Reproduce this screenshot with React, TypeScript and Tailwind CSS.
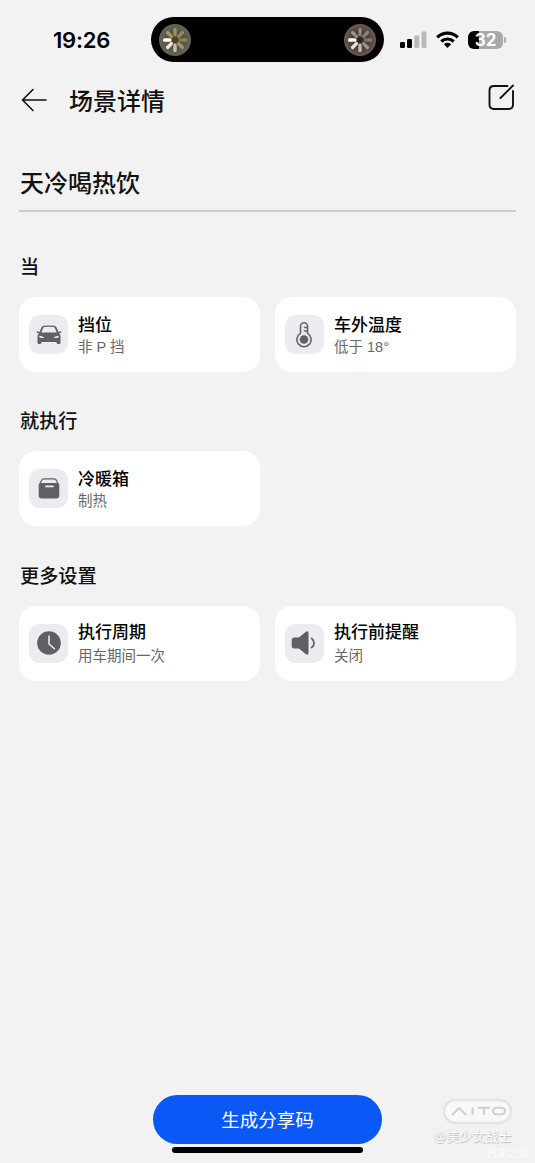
import type { ReactNode } from "react";

const SPOKES = [0, 45, 90, 135, 180, 225, 270, 315];
const OPACITY = [0.45, 0.4, 0.35, 0.5, 0.65, 0.85, 1, 0.5];

function Spinner({ id, inner, outer, tint }: { id: string; inner: string; outer: string; tint: string }) {
  return (
    <svg className="h-8 w-8" viewBox="0 0 32 32" aria-hidden>
      <defs>
        <radialGradient id={id}>
          <stop offset="0" stopColor={inner} />
          <stop offset="1" stopColor={outer} />
        </radialGradient>
      </defs>
      <circle cx="16" cy="16" r="16" fill={`url(#${id})`} />
      {SPOKES.map((angle, i) => (
        <rect
          key={angle}
          x="14.3"
          y="4"
          width="3.4"
          height="8.5"
          rx="1.5"
          fill={i > 3 && i < 7 ? "#fff" : tint}
          opacity={OPACITY[i]}
          transform={`rotate(${angle} 16 16)`}
        />
      ))}
    </svg>
  );
}

function StatusBar() {
  return (
    <div className="flex h-[62px] pt-[17px]">
      <div className="w-[151px] pl-[53px] font-['Inter'] text-[22px] leading-[46px] font-semibold tracking-[-0.2px] text-black">
        19:26
      </div>
      <div className="flex h-[45px] w-[233px] items-center justify-between rounded-full bg-black pr-2 pl-2">
        <Spinner id="left" inner="#4b4016" outer="#66645f" tint="#e8d9a4" />
        <Spinner id="right" inner="#2b1d18" outer="#6b5a52" tint="#e6e6e6" />
      </div>
      <div className="flex h-[45px] items-center pl-4">
        <svg width="27" height="18" viewBox="0 0 27 18" aria-hidden>
          <rect x="0" y="11" width="5" height="6" rx="1.2" fill="#000" />
          <rect x="7" y="8" width="5" height="9" rx="1.2" fill="#000" />
          <rect x="14.3" y="4.500" width="5" height="12.500" rx="1.2" fill="#b9b9b9" />
          <rect x="21.500" y="0.500" width="5" height="16.500" rx="1.2" fill="#b9b9b9" />
        </svg>
        <svg className="ml-[9px]" width="23" height="18" viewBox="0 0 23 18" aria-hidden>
          <g fill="none" stroke="#000" strokeWidth="3.2">
            <path d="M1.200 6.400a14.700 14.700 0 0 1 20.600 0" />
            <path d="M5.300 10.500a8.900 8.900 0 0 1 12.400 0" />
          </g>
          <path d="M11.500 17 7.900 13.300a5.200 5.200 0 0 1 7.200 0z" fill="#000" />
        </svg>
        <div className="ml-[9px] flex items-center">
          <div className="flex h-[18px] w-[35px] items-center justify-center rounded-md bg-[linear-gradient(90deg,#000_0_11px,#a9a9a9_11px)] font-['Inter'] text-[17px] leading-[18px] font-bold text-white">
            32
          </div>
          <div className="ml-px h-[6px] w-[2px] rounded-r-full bg-[#a9a9a9]" />
        </div>
      </div>
    </div>
  );
}

function CarIcon() {
  return (
    <svg width="26" height="20" viewBox="0 0 26 20" aria-hidden>
      <path
        fill="#5f5f64"
        fillRule="evenodd"
        d="M7.500 .8Q13 0 18.500 .8 20 1.100 20.700 2.700L22.500 7l2-.8q1-.2 1 .7-.1.800-2.300 1.400 1.300 1.400 1.300 3.700v5.500q0 1.500-1.400 1.500h-1.300q-1.300 0-1.300-2H5.500q0 2-1.300 2H2.900q-1.400 0-1.400-1.500V12q0-2.300 1.300-3.700Q.6 7.700.5 6.900q0-.9 1-.7l2 .8L5.300 2.700Q6 1.100 7.500 .8ZM7.200 3 5.300 7.600h15.400L18.800 3Q18.500 2.200 17.500 2 13 1.400 8.500 2 7.500 2.200 7.200 3ZM3.300 10.700q-.1 1.800.6 2.100l3.700.2q.8 0 .3-.7-1.500-1.300-4.600-1.600Zm19.400 0q-3.100.3-4.600 1.600-.5.700.3.700l3.700-.2q.7-.3.600-2.100Z"
      />
    </svg>
  );
}

function ThermometerIcon() {
  return (
    <svg className="mr-px" width="16" height="26" viewBox="0 0 16 26" fill="none" stroke="#66666a" strokeWidth="1.600" strokeLinecap="round" aria-hidden>
      <path d="M4.500 11.400V4.300a3.500 3.500 0 0 1 7 0v7.100a7.100 7.100 0 1 1-7 0Z" />
      <path d="M8.300 5.500h2.800M8.300 9h2.800" strokeWidth="1.300" />
      <circle cx="8" cy="17.500" r="4.300" fill="#5f5f64" stroke="none" />
    </svg>
  );
}

function BoxIcon() {
  return (
    <svg width="22" height="21" viewBox="0 0 22 21" aria-hidden>
      <path d="M1.300 7 3.700 2.200Q4.300.9 5.700.9h10.600q1.400 0 2 1.300L20.700 7" fill="none" stroke="#5f5f64" strokeWidth="1.300" />
      <path
        fill="#5f5f64"
        fillRule="evenodd"
        d="M3.200 5h15.600q2.500.3 2.500 2.300v10.200q0 3-3 3H3.700q-3 0-3-3V7.300Q.7 5.300 3.200 5ZM8 7.600a.8.8 0 0 0 0 1.700h7a.8.8 0 0 0 0-1.700Z"
      />
    </svg>
  );
}

function ClockIcon() {
  return (
    <svg width="24" height="24" viewBox="0 0 24 24" aria-hidden>
      <circle cx="12" cy="12" r="11.800" fill="#5f5f64" />
      <path d="M12 5v8l5.500 4.700" fill="none" stroke="#f1f1f5" strokeWidth="1.500" strokeLinecap="round" strokeLinejoin="round" />
    </svg>
  );
}

function SpeakerIcon() {
  return (
    <svg className="mr-px" width="26" height="24" viewBox="0 0 26 24" aria-hidden>
      <path
        fill="#5f5f64"
        d="M3.200 6.500h4.700l6.700-5.600Q17.500-.8 17.500 2.500v19q0 3.300-2.900 1.600l-6.700-5.600H3.200Q.7 17.500.7 15V9q0-2.500 2.500-2.500Z"
      />
      <path d="M20.700 7.300q4.700 4.700 0 9.400" fill="none" stroke="#5f5f64" strokeWidth="1.700" strokeLinecap="round" />
    </svg>
  );
}

function Card({ icon, title, detail, loose }: { icon: ReactNode; title: string; detail: string; loose?: boolean }) {
  return (
    <div className="flex h-[75px] items-center rounded-[17px] bg-white pl-[10px]">
      <div className="flex h-[39px] w-[39px] items-center justify-center rounded-[11px] bg-[#ebebf0]">{icon}</div>
      <div className="ml-[10px] pt-[3px]">
        <p className="text-[17px] leading-[22px] font-medium text-black">{title}</p>
        <p className={`text-[14.5px] leading-[21px] text-[#66666a] ${loose ? "mt-[2px]" : ""}`}>{detail}</p>
      </div>
    </div>
  );
}

function Section({ title, children }: { title: string; children: ReactNode }) {
  return (
    <section className="mb-[33.4px]">
      <h2 className="h-[30px] pt-[2px] pl-px text-[19.2px] leading-[30px] font-medium text-[#111]">{title}</h2>
      <div className="mt-4 grid grid-cols-2 gap-[15px]">{children}</div>
    </section>
  );
}

export default function App() {
  return (
    <div className="relative flex h-[1163px] w-[535px] flex-col overflow-hidden bg-[#f2f2f3] font-['Liberation_Sans','Noto_Sans_CJK_SC',sans-serif]">
      <StatusBar />
      <header className="flex h-[76px] items-center pr-5 pl-[21px]">
        <svg width="26" height="24" viewBox="0 0 26 24" fill="none" stroke="#111" strokeWidth="1.600" strokeLinecap="round" strokeLinejoin="round" aria-hidden>
          <path d="M12 1.500 1.500 12 12 22.500M1.500 12H25" />
        </svg>
        <h1 className="ml-[22px] pt-[3px] text-[24px] leading-9 font-medium text-[#111]">场景详情</h1>
        <svg className="mb-[5px] ml-auto" width="27" height="27" viewBox="0 0 27 27" fill="none" stroke="#111" strokeWidth="1.900" strokeLinecap="round" aria-hidden>
          <path d="M19.500 2H6Q1.500 2 1.500 6.500v14Q1.500 25 6 25h14.500q4.500 0 4.500-4.500V7" />
          <path d="M25 1.500 12.500 14" />
        </svg>
      </header>

      <main className="flex-1 px-[19px]">
        <div className="mt-6 h-[50px] border-b-2 border-[#cbcbcb] pl-px text-[24px] leading-[43px] font-medium text-[#111]">
          天冷喝热饮
        </div>
        <div className="mt-[39px]">
          <Section title="当">
            <Card icon={<CarIcon />} title="挡位" detail="非 P 挡" />
            <Card icon={<ThermometerIcon />} title="车外温度" detail="低于 18°" />
          </Section>
          <Section title="就执行">
            <Card icon={<BoxIcon />} title="冷暖箱" detail="制热" />
          </Section>
          <Section title="更多设置">
            <Card icon={<ClockIcon />} title="执行周期" detail="用车期间一次" loose />
            <Card icon={<SpeakerIcon />} title="执行前提醒" detail="关闭" loose />
          </Section>
        </div>
      </main>

      <footer className="flex h-[68px] flex-col items-center">
        <button type="button" className="h-[49px] w-[229px] rounded-full bg-[#0a59f7] pt-[2px] text-[18.500px] text-white">
          生成分享码
        </button>
        <div className="mt-[3px] h-[6px] w-[191px] rounded-full bg-black" />
      </footer>

      {/* watermark */}
      <div className="absolute right-0 bottom-0 flex w-[110px] flex-col">
        <svg className="ml-[17px]" width="72" height="28" viewBox="0 0 72 28" fill="none" aria-hidden>
          <rect x="2" y="2" width="67" height="23" rx="11.500" fill="#f8f8f8" stroke="#e4e4e4" strokeWidth="2.500" />
          <g stroke="#cfcfcf" strokeWidth="2">
            <path d="m10 17 7-7 7 7M30.500 9.500V17M36 9.800h12M42 9.800V17" />
            <rect x="51" y="9.800" width="12" height="6.500" rx="3.200" />
          </g>
        </svg>
        <p className="ml-[8px] pt-px text-[13px] leading-[20px] whitespace-nowrap text-white [text-shadow:1px_1px_1px_#bbb,0_0_1px_#ccc]">
          @美少女战士
        </p>
        <p className="ml-[62px] h-[16px] text-[10.5px] leading-[13px] text-white/80">汽车之家</p>
      </div>
    </div>
  );
}
